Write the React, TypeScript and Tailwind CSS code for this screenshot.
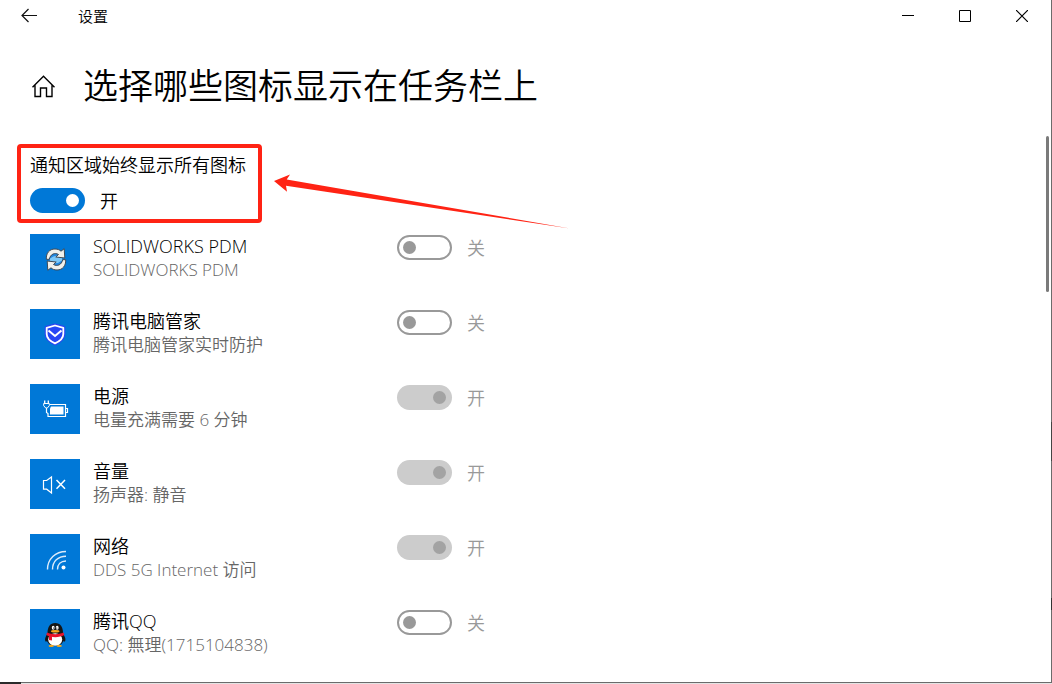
import { useId, useState } from "react";
import type { ReactNode } from "react";

function SyncIcon() {
  return (
    <svg viewBox="0 0 50 50" className="size-full" aria-hidden="true">
      <circle cx="26" cy="25.500" r="8" fill="#1f86e0" />
      <path d="M20 24.500q6-5 12-1v3q-6 5-12 1z" fill="#7cc8f8" />
      <path
        d="M16.300 25.300c-.3-6.300 3.200-10.300 8.700-10.300 2.600 0 4.600.8 6 2.200l3.200-2.500.6 9.300-9-1 2.700-2.500c-3.700-2.200-8.200-.4-9.200 4.800z"
        fill="#f1f1ec"
        stroke="#3f4a55"
        strokeWidth="1"
      />
      <path
        d="M35.700 25.700c.3 6.300-3.200 10.300-8.700 10.300-2.600 0-4.600-.8-6-2.200l-3.200 2.500-.6-9.300 9 1-2.700 2.500c3.700 2.200 8.200.4 9.200-4.800z"
        fill="#f1f1ec"
        stroke="#3f4a55"
        strokeWidth="1"
      />
    </svg>
  );
}

function ShieldIcon() {
  const outline = "M25 16.500l8.300 2.300v6.200c0 4.300-3.400 7.200-8.300 9.300-4.900-2.100-8.300-5-8.300-9.300v-6.200z";
  return (
    <svg viewBox="0 0 50 50" className="size-full" aria-hidden="true">
      <path d={outline} fill="#2b45f2" stroke="#2b45f2" strokeWidth="4" strokeLinejoin="round" />
      <path d={outline} fill="#2746f5" stroke="#fff" strokeWidth="1.800" strokeLinejoin="round" />
      <path d="M18.500 21.500l6.500 5.500 6.500-5.500" fill="none" stroke="#fff" strokeWidth="2" />
    </svg>
  );
}

function PowerIcon() {
  return (
    <svg viewBox="0 0 50 50" className="size-full" fill="none" stroke="#fff" aria-hidden="true">
      <path d="M14.700 16.500v3M18.300 16.500v3" strokeWidth="1.300" />
      <path d="M13.700 19.500h5.600v2.200l-2 2.300h-1.600l-2-2.300z" strokeWidth="1" />
      <path d="M16.500 24v4.500l1.500 1v3h17.500v-12H20" strokeWidth="1.200" />
      <path d="M21 22.500h12.500v8H20v-6z" fill="#fff" stroke="none" />
      <path d="M35.500 24.500h2v4h-2" strokeWidth="1.200" />
    </svg>
  );
}

function MutedIcon() {
  return (
    <svg viewBox="0 0 50 50" className="size-full" fill="none" stroke="#fff" strokeWidth="1.200" aria-hidden="true">
      <path d="M13.500 21.500h3.200l4.800-3.500v16l-4.800-3.800h-3.200z" />
      <path d="M26.500 21l8.500 8.800M35 21l-8.500 8.800" strokeWidth="1.500" />
    </svg>
  );
}

function WifiIcon() {
  return (
    <svg viewBox="0 0 50 50" className="size-full" fill="none" stroke="#dcebfa" strokeWidth="1.400" aria-hidden="true">
      <path d="M17.500 35.500C17.500 25 25.500 17.500 36 17.500" />
      <path d="M22.500 35.500C22.500 27.500 28 22.200 36 22.200" />
      <path d="M27.500 35.500c0-5.200 3.300-8.500 8.500-8.500" />
      <circle cx="33.500" cy="33.500" r="2" fill="#fff" stroke="none" />
    </svg>
  );
}

function PenguinIcon() {
  return (
    <svg viewBox="0 0 50 50" className="size-full" aria-hidden="true">
      <path d="M17.500 25c-2.500 3-3 6-2 7.500 1 .5 2-1 2.500-2M33 25c2.500 3 3 6 2 7.500-1 .5-2-1-2.500-2" fill="#151515" />
      <ellipse cx="25.200" cy="29" rx="9" ry="8" fill="#151515" />
      <ellipse cx="25.200" cy="30.500" rx="7" ry="6.300" fill="#fff" />
      <path d="M17.500 24c0-6 2.500-10 7.700-10s7.800 4 7.800 10z" fill="#151515" />
      <ellipse cx="23.200" cy="18.800" rx="1.400" ry="2" fill="#fff" />
      <ellipse cx="27.200" cy="18.800" rx="1.400" ry="2" fill="#fff" />
      <circle cx="23.600" cy="19" r=".6" fill="#111" />
      <circle cx="26.800" cy="19" r=".6" fill="#111" />
      <ellipse cx="25.200" cy="22.200" rx="4.300" ry="1.300" fill="#f6a91c" />
      <path d="M17 23.500c5 2.300 11.500 2.300 16.500 0l.8 2.600c-5 2.700-13 2.700-18 0z" fill="#e8132b" />
      <path d="M19 26.200l3 1v4.300l-3-.5z" fill="#e8132b" />
      <path d="M18.500 36.700q2.500-2 5.500 0 0 1.300-2.800 1.300t-2.700-1.300zM26.500 36.700q3-2 5.500 0 0 1.300-2.700 1.300t-2.800-1.300z" fill="#f6a91c" />
    </svg>
  );
}

type TrayItem = {
  name: string;
  detail: string;
  icon: ReactNode;
  on: boolean;
  locked?: boolean;
};

const items: TrayItem[] = [
  { name: "SOLIDWORKS PDM", detail: "SOLIDWORKS PDM", icon: <SyncIcon />, on: false },
  { name: "腾讯电脑管家", detail: "腾讯电脑管家实时防护", icon: <ShieldIcon />, on: false },
  { name: "电源", detail: "电量充满需要 6 分钟", icon: <PowerIcon />, on: true, locked: true },
  { name: "音量", detail: "扬声器: 静音", icon: <MutedIcon />, on: true, locked: true },
  { name: "网络", detail: "DDS 5G Internet 访问", icon: <WifiIcon />, on: true, locked: true },
  { name: "腾讯QQ", detail: "QQ: 無理(1715104838)", icon: <PenguinIcon />, on: false },
];

const switchBase =
  "h-[25px] w-[55px] shrink-0 appearance-none rounded-full flex items-center before:size-[13px] before:rounded-full before:content-['']";

function Toggle({
  id,
  initial,
  variant,
}: {
  id: string;
  initial: boolean;
  variant: "accent" | "muted" | "locked";
}) {
  const [on, setOn] = useState(initial);
  const look = !on
    ? "justify-start border-2 border-[#999999] px-1 before:bg-[#999999]"
    : variant === "locked"
      ? "justify-end bg-[#cccccc] px-1.5 before:bg-[#a3a3a3]"
      : "justify-end bg-[#0078d7] px-1.5 before:bg-white";
  return (
    <div className="flex items-center gap-[15px]">
      <input
        id={id}
        type="checkbox"
        role="switch"
        checked={on}
        disabled={variant === "locked"}
        onChange={(e) => setOn(e.target.checked)}
        className={`${switchBase} ${look}`}
      />
      <span className={`pt-0.5 ${variant === "accent" ? "text-black" : "text-[#999999]"}`}>{on ? "开" : "关"}</span>
    </div>
  );
}

function TrayRow({ item }: { item: TrayItem }) {
  const id = useId();
  return (
    <li className="flex items-start">
      <div className="size-[50px] shrink-0 bg-[#0078d7]">{item.icon}</div>
      <label htmlFor={id} className="ml-[13px] w-[304px] pt-px">
        <span className="block">{item.name}</span>
        <span className="block text-[17px] text-[#666666]">{item.detail}</span>
      </label>
      <div className="pt-px">
        <Toggle id={id} initial={item.on} variant={item.locked ? "locked" : "muted"} />
      </div>
    </li>
  );
}

function Arrow() {
  return (
    <svg
      viewBox="0 0 296 56"
      className="pointer-events-none absolute top-[29px] left-[257px] h-[56px] w-[296px]"
      aria-hidden="true"
    >
      <path d="M0 8L16 1.500 12.700 6.500 296 55.500 12 12.700 13 18.700z" fill="#ff2314" />
    </svg>
  );
}

export default function App() {
  return (
    <div className="flex min-h-screen flex-col bg-white font-['Open_Sans','Noto_Sans_CJK_SC',sans-serif] text-[18px] leading-[23px] font-[350] text-black">
      <div className="flex grow">
        <div className="flex min-w-0 grow flex-col">
          <header className="-mr-1 flex h-8 items-center">
            <button type="button" aria-label="返回" className="ml-[21px] size-4">
              <svg viewBox="0 0 16 16" fill="none" stroke="#111" strokeWidth="1.200">
                <path d="M16 7.500H1M7.500 1L1 7.500 7.500 14" />
              </svg>
            </button>
            <span className="ml-[41px] grow text-[15px]">设置</span>
            <button type="button" aria-label="最小化" className="flex h-8 w-[57px] items-center justify-center">
              <svg viewBox="0 0 12 12" className="size-3" stroke="#000">
                <path d="M0 5.500h12" />
              </svg>
            </button>
            <button type="button" aria-label="最大化" className="flex h-8 w-[57px] items-center justify-center">
              <svg viewBox="0 0 12 12" className="size-3" fill="none" stroke="#000">
                <path d="M.5 .5h11v11H.5z" />
              </svg>
            </button>
            <button type="button" aria-label="关闭" className="flex h-8 w-[57px] items-center justify-center">
              <svg viewBox="0 0 12 12" className="size-3" stroke="#000" strokeWidth="1.200">
                <path d="M0 0l12 12M12 0L0 12" />
              </svg>
            </button>
          </header>

          <div className="mt-[29px] flex h-[50px] items-center">
            <a href="#home" aria-label="主页" className="ml-8 size-[23px]">
              <svg viewBox="0 0 23 23" fill="none" stroke="#000" strokeWidth="1.400">
                <path d="M.5 12.300L11.500 1.300l11 11M3 10v11.500h5.500v-8.500h6v8.500H20V10" />
              </svg>
            </a>
            <h1 className="ml-7 text-[35px] leading-[50px]">选择哪些图标显示在任务栏上</h1>
          </div>

          <main className="mt-[33px] pb-[21px] pl-[17px]">
            <div className="relative">
              <section className="w-[245px] rounded-[4px] border-4 border-[#ff2314] py-1.5 pl-[9px]">
                <label htmlFor="show-all" className="block whitespace-nowrap">
                  通知区域始终显示所有图标
                </label>
                <div className="mt-[11px]">
                  <Toggle id="show-all" initial={true} variant="accent" />
                </div>
              </section>
              <Arrow />
            </div>
            <ul className="mt-[11px] ml-[13px] flex flex-col gap-[25px]">
              {items.map((item) => (
                <TrayRow key={item.name} item={item} />
              ))}
            </ul>
          </main>
        </div>
        <div className="w-[5px] shrink-0 pt-[136px]">
          <div className="h-[156px] w-[3px] rounded-sm bg-[#7a7a7a]" />
        </div>
        <div className="w-px shrink-0 bg-[#6b6b6b]">
          <div className="mt-[422px] h-[39px] bg-[#444444]" />
          <div className="mt-[137px] h-3 bg-[#333333]" />
        </div>
      </div>
      <footer className="flex h-0.5">
        <div className="w-[21px] bg-[#2b2b2b]" />
        <div className="grow border-t border-[#6b6b6b] bg-[#e4e4e4]" />
      </footer>
    </div>
  );
}
